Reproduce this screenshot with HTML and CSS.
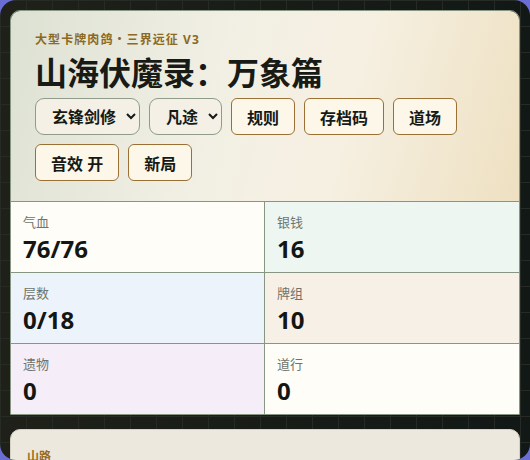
FILE: index.html
```html
<!DOCTYPE html>
<html>

<head>
    <title>山海伏魔录：万象篇</title>
    <link rel="stylesheet" href="styles.css">
</head>

<body>
    <div class="app">
        <div class="panel">
            <header class="hero">
                <p class="eyebrow">大型卡牌肉鸽・三界远征 V3</p>
                <h1>山海伏魔录：万象篇</h1>
                <div class="toolbar">
                    <select class="pick">
                        <option>玄锋剑修</option>
                        <option>灵符术士</option>
                    </select>
                    <select class="pick">
                        <option>凡途</option>
                        <option>劫难</option>
                    </select>
                    <button type="button">规则</button>
                    <button type="button">存档码</button>
                    <button type="button">道场</button>
                    <button type="button">音效 开</button>
                    <button type="button">新局</button>
                </div>
            </header>

            <div class="stats">
                <div class="stat hp"><span class="label">气血</span><b class="value">76/76</b></div>
                <div class="stat gold"><span class="label">银钱</span><b class="value">16</b></div>
                <div class="stat floor"><span class="label">层数</span><b class="value">0/18</b></div>
                <div class="stat deck"><span class="label">牌组</span><b class="value">10</b></div>
                <div class="stat relic"><span class="label">遗物</span><b class="value">0</b></div>
                <div class="stat dao"><span class="label">道行</span><b class="value">0</b></div>
            </div>
        </div>

        <section class="map">
            <h2>山路</h2>
        </section>
    </div>
</body>

</html>
```

FILE: styles.css
```css
html {
    background-color: #6a6ed4;
}

body {
    margin: 0;
    font-family: "Noto Sans", "Noto Sans CJK SC", sans-serif;
    color: #161915;
}

.app {
    height: 100vh;
    overflow: hidden;
    box-sizing: border-box;
    padding: 10px;
    border-radius: 16px;
    background-color: #161a16;
    background-image:
        linear-gradient(90deg, #262b25 1px, transparent 1px),
        linear-gradient(#262b25 1px, transparent 1px),
        linear-gradient(90deg, #1f2119, #121816);
    background-size: 26px 26px, 26px 26px, 100% 100%;
}

.panel {
    border: 1px solid #879683;
    border-radius: 10px 10px 0 0;
    overflow: hidden;
}

/* header */
.hero {
    padding: 20px 24px;
    background: linear-gradient(105deg, #dce1d2 0%, #f1efe4 38%, #f6f0e2 65%, #eee0c1 100%);
}

.eyebrow {
    margin: 0;
    font-size: 12px;
    line-height: 18px;
    font-weight: 700;
    letter-spacing: 0.09em;
    color: #8c6a24;
}

h1 {
    margin: 4px 0 0;
    font-size: 32px;
    line-height: 40px;
    font-weight: 700;
    color: #181a16;
}

.toolbar {
    display: flex;
    flex-wrap: wrap;
    gap: 9px;
    margin-top: 5px;
    width: 430px;
}

button,
.pick {
    height: 37px;
    box-sizing: border-box;
    font-family: inherit;
    font-size: 16px;
    font-weight: 700;
    color: #161915;
}

button {
    padding: 0 15px;
    border: 1px solid #9b7034;
    border-radius: 6px;
    background-color: #fdf7ea;
    cursor: pointer;
}

button:hover {
    background-color: #f7ecd4;
}

.pick {
    padding: 0 6px 0 12px;
    border: 1px solid #8f9c8a;
    border-radius: 9px;
    background-color: #f4f0e5;
}

/* stat grid */
.stats {
    display: grid;
    grid-template-columns: 1fr 1fr;
}

.stat {
    display: flex;
    flex-direction: column;
    padding: 11px 12px 8px;
    border-top: 1px solid #879683;
}

.stat:nth-child(odd) {
    border-right: 1px solid #879683;
}

.label {
    font-size: 13px;
    line-height: 18px;
    color: #6d746d;
}

.value {
    margin-top: 3px;
    font-size: 24px;
    line-height: 30px;
    font-weight: 700;
    color: #141614;
}

.hp { background-color: #fffdf7; }
.gold { background-color: #edf6f1; }
.floor { background-color: #edf3fb; }
.deck { background-color: #f7f0e6; }
.relic { background-color: #f5edf8; }
.dao { background-color: #fffdf7; }

/* path section */
.map {
    margin-top: 14px;
    padding: 18px 16px;
    min-height: 120px;
    border: 1px solid #d6d0c0;
    border-radius: 10px;
    background-color: #ece8dd;
}

h2 {
    margin: 0;
    font-size: 12px;
    line-height: 18px;
    font-weight: 700;
    color: #9a6b1c;
}
```
